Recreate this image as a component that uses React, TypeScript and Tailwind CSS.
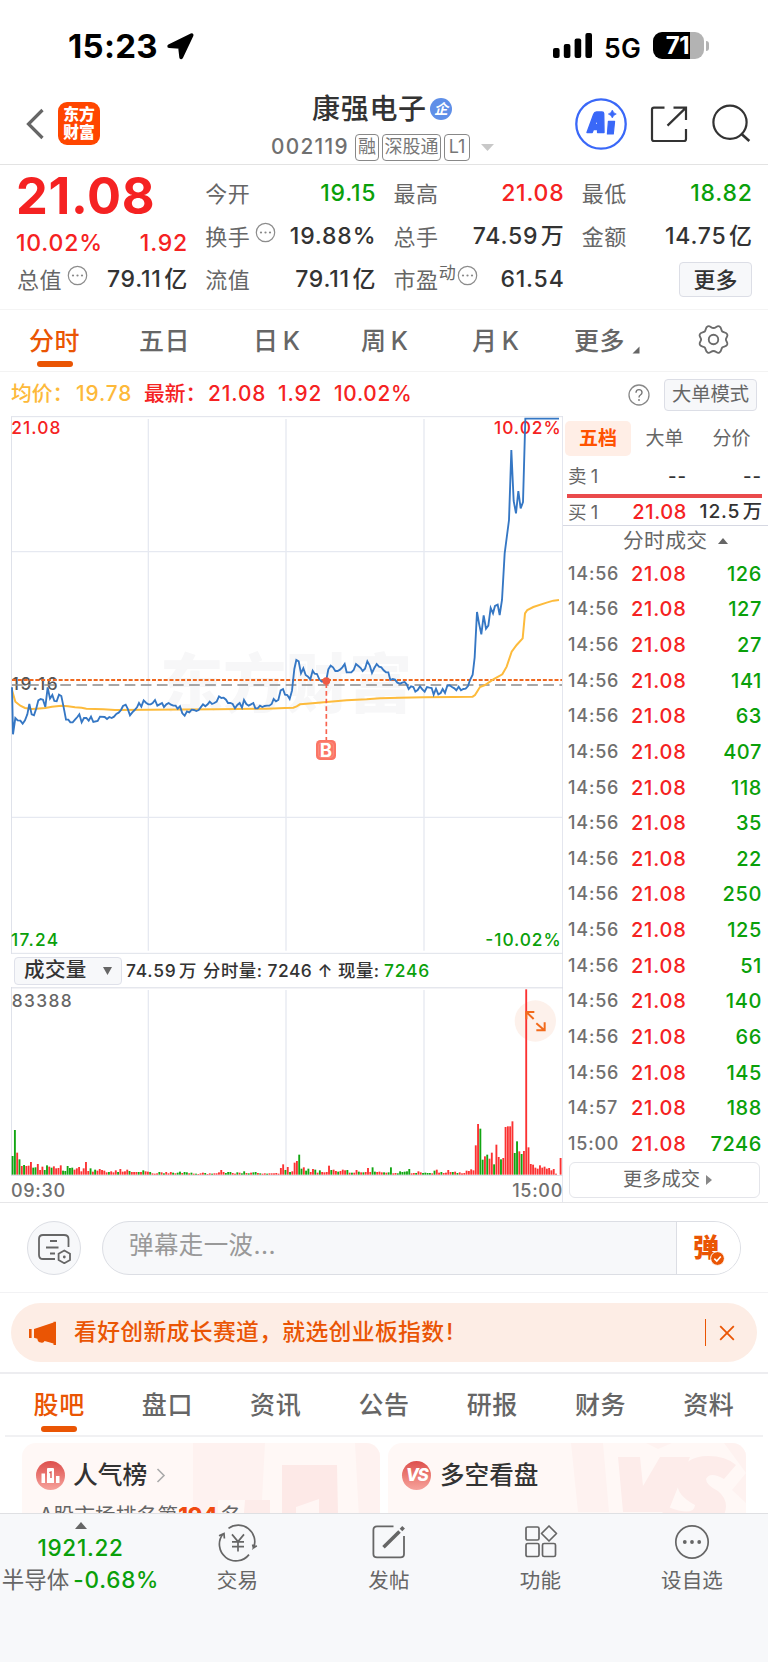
import React from "react";

const RED = "text-[#f52222]";
const GREEN = "text-[#0aa00a]";

/* ---------- small pieces ---------- */

function Dots({ className = "" }: { className?: string }) {
  return (
    <svg className={className} width="21" height="21" viewBox="0 0 21 21">
      <circle cx="10.5" cy="10.5" r="9.2" fill="none" stroke="#8c8c8c" strokeWidth="1.2" />
      <circle cx="6" cy="10.5" r="1.1" fill="#888" />
      <circle cx="10.5" cy="10.5" r="1.1" fill="#888" />
      <circle cx="15" cy="10.5" r="1.1" fill="#888" />
    </svg>
  );
}

/* A number with an optional Chinese unit set slightly apart from it. */
function Num({ value }: { value: string }) {
  const unit = /[万亿]$/.test(value) ? value.slice(-1) : "";
  const digits = unit ? value.slice(0, -1) : value;
  return (
    <span className="-mr-[0.8px] tracking-[0.8px]">
      {digits}
      {unit && <span className="ml-[2.5px]">{unit}</span>}
    </span>
  );
}

function StatusBar() {
  return (
    <div className="flex h-[80px] items-start pl-[68px] pt-[27px] text-black">
      <div className="flex h-[38px] w-[96px] items-center text-[33px] font-bold leading-none tracking-[0.3px]">15:23</div>
      <svg className="mt-[5px] ml-[1px]" width="30" height="30" viewBox="0 0 30 30">
        <path d="M26.6 3.2 L16.2 25.2 L15 14.9 L4.2 14.1 Z" fill="#000" stroke="#000" strokeWidth="3.8" strokeLinejoin="round" />
      </svg>
      <svg className="ml-[358px] mt-[5px]" width="40" height="28" viewBox="0 0 40 28">
        <rect x="0" y="16" width="6.6" height="10" rx="2" />
        <rect x="10.8" y="12" width="6.6" height="14" rx="2" />
        <rect x="21.6" y="6.5" width="6.6" height="19.5" rx="2" />
        <rect x="32.4" y="1" width="6.6" height="25" rx="2" />
      </svg>
      <div className="ml-[11px] mt-[7px] flex h-[28px] w-[49px] items-center text-[26.5px] font-semibold leading-none tracking-[0.3px]">5G</div>
      <div className="mt-[5px] flex items-center">
        <div className="flex h-[27px] w-[51px] items-center justify-center overflow-hidden rounded-[9px] bg-[linear-gradient(90deg,#000_72%,#b3b3b3_72%)] text-[24px] font-bold leading-none tracking-[-0.3px] text-white">
          <span className="-ml-[2px]">71</span>
        </div>
        <div className="ml-[2px] h-[10px] w-[3px] rounded-r-full bg-[#b3b3b3]" />
      </div>
    </div>
  );
}

function Tag({ children, w }: { children: React.ReactNode; w: string }) {
  return (
    <span className={`flex h-[27px] shrink-0 items-center justify-center rounded-[4px] border border-[#888] text-[18px] leading-none text-[#777] ${w}`}>
      {children}
    </span>
  );
}

function Header() {
  return (
    <div className="flex h-[85px] items-start border-b border-[#e3e3e3]">
      <svg className="ml-[25px] mt-[27px]" width="20" height="34" viewBox="0 0 20 34">
        <path d="M17.5 3 L3.5 17 L17.5 31" fill="none" stroke="#666" strokeWidth="3.2" />
      </svg>
      <div className="ml-[13px] mt-[22px] flex h-[43px] w-[42px] flex-col items-center justify-center rounded-[9px] bg-[#ff4600] text-[15.8px] font-black leading-[18px] text-white">
        <span>东方</span>
        <span>财富</span>
      </div>
      <div className="ml-[171px] w-[251px]">
        <div className="mt-[12px] flex h-[34px] items-center pl-[41px]">
          <span className="w-[116px] whitespace-nowrap text-[28px] font-medium leading-none tracking-[0.7px] text-[#333]">康强电子</span>
          <span className="ml-[2px] flex h-[22px] w-[22px] items-center justify-center rounded-full bg-[#5f8fe8] text-[14px] font-bold italic leading-none text-white">企</span>
        </div>
        <div className="mt-[7px] flex h-[28px] items-center gap-[3px]">
          <span className="w-[81px] text-[20.8px] font-medium leading-none tracking-[1.3px] text-[#707070]">002119</span>
          <Tag w="w-[24px]">融</Tag>
          <Tag w="w-[59px]">深股通</Tag>
          <Tag w="w-[26px]">L1</Tag>
          <svg className="ml-[8px]" width="13" height="7" viewBox="0 0 13 7">
            <path d="M0 0 H13 L6.5 7 Z" fill="#c8c8c8" />
          </svg>
        </div>
      </div>
      <svg className="ml-[53px] mt-[18px]" width="52" height="52" viewBox="0 0 52 52">
        <circle cx="26" cy="26" r="24.7" fill="#fff" stroke="#3a68f8" strokeWidth="2.3" />
        <path d="M12 34.5 L18.7 16.2 Q19.5 14 21.5 14 H27 Q28.6 14 28.7 15.6 L29 34.5 H22.6 V31.5 H18.4 L17.2 34.5 Z M19.9 26.8 H22.5 V20.2 Z" fill="#3a68f8" stroke="#3a68f8" strokeWidth="1.4" strokeLinejoin="round" fillRule="evenodd" />
        <path d="M33.4 23.3 H39.6 L38.3 36 H32.4 Z" fill="#3a68f8" stroke="#3a68f8" strokeWidth="1.2" strokeLinejoin="round" />
        <path d="M37.3 12 Q38.2 15 41.3 16 Q38.2 17 37.3 20 Q36.4 17 33.3 16 Q36.4 15 37.3 12 Z" fill="#3a68f8" stroke="#3a68f8" strokeWidth="0.6" />
      </svg>
      <svg className="ml-[22px] mt-[25px]" width="40" height="40" viewBox="0 0 40 40" fill="none" stroke="#333" strokeWidth="2.2">
        <path d="M15.5 2.6 H5 Q3 2.6 3 4.6 V34 Q3 36 5 36 H35 Q37 36 37 34 V24" />
        <path d="M24.5 2.6 H37 V15 M37 2.6 L18.5 20.6" />
      </svg>
      <svg className="ml-[22px] mt-[24px]" width="42" height="40" viewBox="0 0 42 40" fill="none" stroke="#333" strokeWidth="2.2">
        <circle cx="19" cy="18.2" r="16.6" />
        <path d="M30 29.5 L38.3 37" strokeWidth="2.6" />
      </svg>
    </div>
  );
}

function Quote({ label, value, color = "text-[#333]", extra }: { label: string; value: string; color?: string; extra?: React.ReactNode }) {
  return (
    <div className="flex items-center justify-between whitespace-nowrap">
      <span className="flex items-center">
        <span className="text-[22px] tracking-[0.6px] text-[#666]">{label}</span>
        {extra}
      </span>
      <span className={`text-[23px] font-medium ${color}`}>
        <Num value={value} />
      </span>
    </div>
  );
}

function Quotes() {
  return (
    <div className="grid h-[145px] grid-cols-4 grid-rows-[43px_43px_43px] gap-x-[18px] border-b border-[#f4f4f4] pl-[17px] pr-[16px] pt-[7px] leading-none">
      <div className={`-ml-[1px] flex items-center pt-[6px] text-[50.5px] font-bold tracking-[0.7px] ${RED}`}>21.08</div>
      <Quote label="今开" value="19.15" color={GREEN} />
      <Quote label="最高" value="21.08" color={RED} />
      <Quote label="最低" value="18.82" color={GREEN} />

      <div className={`-ml-[1px] flex items-center justify-between pt-[13px] text-[23px] font-medium ${RED}`}>
        <Num value="10.02%" />
        <Num value="1.92" />
      </div>
      <Quote label="换手" value="19.88%" extra={<Dots className="-mt-[9px] ml-[5px]" />} />
      <Quote label="总手" value="74.59万" />
      <Quote label="金额" value="14.75亿" />

      <Quote label="总值" value="79.11亿" extra={<Dots className="-mt-[9px] ml-[5px]" />} />
      <Quote label="流值" value="79.11亿" />
      <Quote
        label="市盈"
        value="61.54"
        extra={
          <>
            <span className="-mt-[13px] text-[17px] text-[#666]">动</span>
            <Dots className="-mt-[9px] ml-[1px]" />
          </>
        }
      />
      <div className="flex items-center justify-end">
        <div className="flex h-[35px] w-[73px] items-center justify-center rounded-[4px] border border-[#dcdee6] bg-[#f7f8fa] text-[22px] font-medium text-[#333]">更多</div>
      </div>
    </div>
  );
}

function PeriodTabs() {
  const tabs: [string, string][] = [
    ["五日", "w-[114px]"],
    ["日 K", "w-[108px]"],
    ["周 K", "w-[111px]"],
    ["月 K", "w-[102px]"],
  ];
  return (
    <div className="flex h-[62px] border-b border-[#f3f3f3] pl-[29px] text-[25px] font-medium leading-none tracking-[0.5px] text-[#666]">
      <div className="flex w-[110px] flex-col text-[#ea5504]">
        <span className="mt-[19px]">分时</span>
        <span className="ml-[8px] mt-[7px] h-[6px] w-[36px] rounded-full bg-[#ea5504]" />
      </div>
      {tabs.map(([t, w]) => (
        <span key={t} className={`mt-[19px] [word-spacing:-3px] ${w}`}>{t}</span>
      ))}
      <span className="mt-[19px] w-[58px] whitespace-nowrap">更多</span>
      <svg className="mt-[36px]" width="8" height="8" viewBox="0 0 8 8">
        <path d="M7.5 0.5 V7.5 H0.5 Z" fill="#666" />
      </svg>
      <svg className="ml-[58px] mt-[14px]" width="31" height="31" viewBox="0 0 30 30" fill="none" stroke="#6b6b6b" strokeWidth="1.8" strokeLinejoin="round">
        <path d="M15 3.9 C17.6 3.9 18.2 1.3 20.6 2.3 C23 3.3 22.2 6.1 23.5 7.3 C24.8 8.5 27.3 7.9 28.3 10 C29.3 12 27 13 27 15 C27 17 29.3 18 28.3 20 C27.3 22.1 24.8 21.5 23.5 22.7 C22.2 23.9 23 26.7 20.6 27.7 C18.2 28.7 17.6 26.1 15 26.1 C12.4 26.1 11.8 28.7 9.4 27.7 C7 26.7 7.8 23.9 6.5 22.7 C5.2 21.5 2.7 22.1 1.7 20 C0.7 18 3 17 3 15 C3 13 0.7 12 1.7 10 C2.7 7.9 5.2 8.5 6.5 7.3 C7.8 6.1 7 3.3 9.4 2.3 C11.8 1.3 12.4 3.9 15 3.9 Z" />
        <circle cx="15" cy="15" r="4.6" />
      </svg>
    </div>
  );
}

function InfoRow() {
  return (
    <div className={`flex h-[44px] items-center whitespace-nowrap pl-[11px] pt-[1px] text-[20.8px] font-medium leading-none ${RED}`}>
      <span className="w-[65px] text-[#fdb93a]">均价：</span>
      <span className="w-[68px] tracking-[0.9px] text-[#fdb93a]">19.78</span>
      <span className="w-[64px]">最新：</span>
      <span className="w-[70px] tracking-[0.9px]">21.08</span>
      <span className="w-[56px] tracking-[0.9px]">1.92</span>
      <span className="tracking-[0.7px]">10.02%</span>
      <svg className="ml-auto" width="22" height="22" viewBox="0 0 22 22">
        <circle cx="11" cy="11" r="10" fill="none" stroke="#888" strokeWidth="1.3" />
        <path d="M8 8.7 Q8 5.6 11 5.6 Q14 5.6 14 8.4 Q14 10 12.4 11 Q11 11.9 11 13.4" fill="none" stroke="#777" strokeWidth="1.4" />
        <circle cx="11" cy="16" r="0.9" fill="#777" />
      </svg>
      <div className="ml-[14px] mr-[11px] flex h-[32px] w-[93px] items-center justify-center rounded-[4px] border border-[#dcdee6] bg-[#f7f8fa] text-[19.3px] font-normal text-[#666]">大单模式</div>
    </div>
  );
}

/* ---------- price chart ---------- */

type P = [number, number];
const parse = (s: string, dx: number, dy: number): P[] =>
  s.trim().split(/\s+/).map((p) => {
    const [x, y] = p.split(",").map(Number);
    return [x + dx, y + dy];
  });
const join = (a: P[]) => a.map((p) => p.join(",")).join(" ");

const price = join([
  ...parse(
    "36,262 39,403 46,354 53,361 61,362 68,371 75,361 82,343 88,312 95,343 102,346 109,325 115,301 122,297 129,299 136,321 143,262 150,296 157,285 163,303 170,304 177,284 184,288 191,322 198,359 205,359 211,367 218,367 225,359 232,351 238,343 245,367 252,354 259,354 266,362 273,350 280,366 293,363 300,350 314,351 321,357 328,351 335,354 342,350 349,342 356,338 363,330 369,318 377,314 383,326 390,346 397,337 404,330 411,322 417,309 424,320 431,301 438,308 445,313 452,313 458,309 465,300 472,317 479,313 486,309 492,321 499,313 506,309 513,314 520,317 527,317 533,326 540,319 547,340 554,347 561,334 568,337 575,329 582,330 589,333 596,330 602,322 609,313 616,319 623,313 629,305 636,312 643,309 650,305 657,289 664,294 671,293 678,299 684,309 691,309 698,312 705,325 712,315 719,309 726,323 732,300 739,312 746,317 753,313 760,309 766,325 773,325 780,317 787,321 794,318 801,317 808,317 815,312 821,297 828,304 835,300 842,271 849,267 855,284 862,285 869,297 876,272 883,207",
    0,
    1800
  ),
  ...parse(
    "49,180 56,184 63,220 70,205 77,225 84,230 91,238 98,212 104,221 111,222 118,238 125,245 132,245 139,240 145,208 152,197 159,202 166,213 173,213 180,209 187,202 194,192 200,217 214,217 221,210 228,192 235,198 242,204 248,213 255,206 262,184 269,196 276,219 283,204 290,192 297,200 304,202 311,211 318,217 325,217 331,240 338,237 345,239 352,248 360,251 367,248 374,246 380,253 386,267 393,259 400,261 406,275 413,270 420,259 427,268 434,275 441,261 448,263 455,264 461,284 468,266 475,283 482,279 488,267 495,279 502,257 509,256 516,261 523,265 529,271 536,260 543,271 550,267 557,266 564,258 570,240 578,224 584,172 591,36 597,70 604,103 611,46 618,86 625,77 632,24 639,40 645,18 653,14 659,45 666,0",
    840,
    1800
  ),
  ...parse("362,760 375,660 382,450 389,603 396,640 403,573 410,625 417,606 424,356 525,356", 1152, 900),
]);

const average = join([
  ...parse(
    "36,270 46,305 61,317 75,324 95,327 109,326 136,324 156,320 184,317 204,319 225,322 245,323 259,326 310,328 345,330 650,328 800,326 855,324 880,323",
    0,
    1800
  ),
  ...parse(
    "50,319 60,313 80,311 140,306 200,301 260,298 300,295 360,293 430,292 520,291 578,290 585,285 600,261 615,255 640,238 667,223 680,200 695,155 710,135 728,115 735,40 742,30 760,21 800,8 820,2 837,0",
    840,
    1800
  ),
]);

const svgFont = "font-['Inter','Noto_Sans_CJK_SC',sans-serif] font-medium";

function PriceChart() {
  return (
    <svg className="block" width="552" height="538" viewBox="33 1248 1656 1614">
      <text className="font-['Noto_Sans_CJK_SC',sans-serif] font-black" x="480" y="2122" fontSize="190" textLength="756" lengthAdjust="spacing" fill="#f7f7f8">东方财富</text>
      <g stroke="#e6e9f1" strokeWidth="4">
        <path d="M445 1257 V2852 M858 1257 V2852 M1272 1257 V2852" />
        <path d="M34 1655 H1686 M34 2452 H1686" />
      </g>
      <path d="M34.5 1250 V2862 M33 1250 H1689 M33 2860 H1689" stroke="#dfe2ea" strokeWidth="3" fill="none" />
      <g className={svgFont} fontSize="52">
        <text x="34" y="1303" textLength="147" fill="#f52222">21.08</text>
        <text x="1482" y="1303" textLength="200" fill="#f52222">10.02%</text>
        <text x="33" y="2839" textLength="141" fill="#0aa00a">17.24</text>
        <text x="1456" y="2839" textLength="226" fill="#0aa00a">-10.02%</text>
        <text x="35" y="2071" textLength="138" fill="#555">19.16</text>
      </g>
      <path d="M36 2055 H1686" stroke="#8a8a8a" strokeWidth="5" strokeDasharray="32 16.3" />
      <path d="M36 2040 H1686" stroke="#f0681e" strokeWidth="6" strokeDasharray="12 5.5" />
      <polyline points={average} fill="none" stroke="#fdbb3c" strokeWidth="6" />
      <polyline points={price} fill="none" stroke="#3577c4" strokeWidth="5.6" />
      <path d="M979 2050 V2220" stroke="#f8634f" strokeWidth="5" strokeDasharray="14 9" />
      <circle cx="979" cy="2043" r="11.5" fill="#ee5a45" />
      <rect x="948" y="2220" width="60" height="60" rx="13" fill="#fb7565" />
      <rect x="956" y="2228" width="44" height="44" rx="8" fill="none" stroke="#fb8f82" strokeWidth="3" />
      <text className="font-['Inter'] font-bold" x="978" y="2270" textAnchor="middle" fontSize="56" fill="#fff">B</text>
    </svg>
  );
}

/* ---------- volume chart ---------- */

const volumeBars =
  "56g 134g 66r 46g 26r 29g 26r 27r 38r 21g 22g 32r 14r 24r 14g 28g 24r 21g 25r 19r 20r 28r 12g 11g 26g 20g 21g 15r 19r 23r 10r 19r 38r 11r 19g 9r 15g 12r 17r 14r 12r 7r 8g 10r 7r 13r 8g 17r 9r 10r 15r 11g 8r 8r 8r 8g 8r 13g 10r 9r 8g 4r 3r 4r 8g 7r 4g 8r 4r 8r 6g 4r 6g 9g 5r 8g 7g 4r 6g 3r 3g 2r 4r 6r 5g 2r 4r 3g 4r 4r 7r 14r 8r 5g 8g 8g 5r 3r 7g 6r 4g 10g 5r 4g 6r 7g 8g 5r 4g 3r 4r 3g 4r 4r 4r 5r 3r 20r 31r 14g 23r 8g 10r 36r 41r 60g 18g 22r 12g 18g 8r 17r 15g 6r 13g 8r 7r 8r 27r 14g 15r 11r 9g 11r 15r 13r 14g 6r 6g 6r 14r 9g 7r 7g 8r 20r 8r 22g 9g 8r 9r 7r 7g 6r 7g 22g 4r 5r 4g 10g 8g 9g 10g 17g 4r 5r 5g 10r 7r 5g 6g 5g 5g 4r 12g 15r 6r 8g 5r 6r 14r 8r 8g 9r 5g 7r 4r 5r 12r 11r 16r 13r 88r 152r 138g 45g 55r 60g 48r 66r 31g 90r 53r 46g 50r 143r 145r 145r 160r 65g 100g 70r 62g 71r 556r 82r 32r 30r 21r 18r 28r 21r 24r 18r 20r 13r 17r 3r 0r 50r";

const volumes = volumeBars.split(" ").map((s) => ({ h: parseInt(s, 10), up: s.endsWith("r") }));

function VolumeChart() {
  const last = volumes.length - 1;
  const step = (1681 - 37) / last;
  return (
    <svg className="block" width="552" height="189" viewBox="33 2963 1656 567">
      <path d="M445 2972 V3526 M858 2972 V3526 M1272 2972 V3526" stroke="#e6e9f1" strokeWidth="4" />
      <path d="M34.5 2963 V3530" stroke="#dfe2ea" strokeWidth="3" />
      <circle cx="1606" cy="3065" r="62" fill="#fdf1eb" />
      {volumes.map((v, i) => (
        <rect key={i} x={35 + i * step} y={3526 - v.h} width="5.6" height={v.h} fill={v.up ? "#fb3232" : "#12a512"} />
      ))}
      <g fill="none" stroke="#f26a1b" strokeWidth="6">
        <path d="M1579 3060 V3038 H1603 M1579 3038 L1601 3059" />
        <path d="M1609 3072 L1633 3093 M1634 3069 V3093 H1609" />
      </g>
      <path d="M33 2965.5 H1689" stroke="#d9dbe4" strokeWidth="3" />
      <path d="M33 3528.5 H1689" stroke="#dfe2ea" strokeWidth="3" />
      <text className={svgFont} x="35" y="3024" fontSize="52" textLength="180" fill="#666">83388</text>
    </svg>
  );
}

/* ---------- order book ---------- */

const trades: [string, string][] = [
  ["14:56", "126"], ["14:56", "127"], ["14:56", "27"], ["14:56", "141"], ["14:56", "63"], ["14:56", "407"],
  ["14:56", "118"], ["14:56", "35"], ["14:56", "22"], ["14:56", "250"], ["14:56", "125"], ["14:56", "51"],
  ["14:56", "140"], ["14:56", "66"], ["14:56", "145"], ["14:57", "188"], ["15:00", "7246"],
];

function OrderBook() {
  return (
    <div className="flex flex-1 flex-col leading-none">
      <div className="mt-[5px] flex h-[35px] items-center pl-[2px] text-[19px] text-[#666]">
        <span className="flex h-[35px] w-[66px] items-center justify-center rounded-[5px] bg-[#ffeee6] font-bold text-[#ff5200]">五档</span>
        <span className="flex w-[67px] justify-center">大单</span>
        <span className="flex w-[67px] justify-center">分价</span>
      </div>
      <div className="ml-[5px] mr-[6px] mt-[3px] flex h-[34px] items-center text-[18.5px] text-[#666]">
        <span className="w-[36px] [word-spacing:-1px]">卖 1</span>
        <span className="w-[83px] text-right font-medium tracking-[1px] text-[#333]">--</span>
        <span className="flex-1 text-right font-medium tracking-[1px] text-[#333]">--</span>
      </div>
      <div className="ml-[4px] mr-[6px] mt-[1px] h-[4px] shrink-0 bg-[#ea4a4c]" />
      <div className="ml-[5px] mr-[6px] mt-[1px] flex h-[26px] items-center text-[18.5px] text-[#666]">
        <span className="w-[36px] [word-spacing:-1px]">买 1</span>
        <span className={`w-[83px] text-right text-[20px] font-medium tracking-[0.6px] ${RED}`}>21.08</span>
        <span className="flex flex-1 justify-end text-[19.3px] font-medium text-[#333]">
          <Num value="12.5万" />
        </span>
      </div>
      <div className="flex h-[31px] items-center border-t-[1.5px] border-[#d6d8e2] pl-[60px] text-[20.8px] tracking-[0.3px] text-[#666]">
        分时成交
        <svg className="ml-[11px]" width="10" height="6" viewBox="0 0 10 6">
          <path d="M0 6 L5 0 L10 6 Z" fill="#666" />
        </svg>
      </div>
      <div className="ml-[5px] mr-[6px] flex flex-col">
        {trades.map(([t, v], i) => (
          <div key={i} className="flex h-[35.64px] items-center">
            <span className="w-[63px] text-[18px] font-medium tracking-[0.8px] text-[#707070]">{t}</span>
            <span className={`text-[20px] font-medium tracking-[0.8px] ${RED}`}>21.08</span>
            <span className={`ml-auto text-[20px] font-medium tracking-[0.6px] ${GREEN}`}>{v}</span>
          </div>
        ))}
      </div>
      <div className="ml-[6px] mr-[8px] flex h-[36px] items-center rounded-[6px] border border-[#e4e5ea] pl-[53px] text-[19.3px] text-[#666]">
        更多成交
        <svg className="ml-[6px]" width="6" height="10" viewBox="0 0 6 10">
          <path d="M0 0 L6 5 L0 10 Z" fill="#888" />
        </svg>
      </div>
    </div>
  );
}

function Main() {
  return (
    <div className="flex h-[787px] border-b border-[#e6e6e8] pl-[11px]">
      <div className="flex w-[552px] flex-col border-r border-[#e4e6ee]">
        <PriceChart />
        <div className="flex h-[33px] items-center pb-[1px] pl-[3px] pt-[1px] text-[17.4px] font-medium leading-none text-[#333]">
          <div className="flex h-[28px] w-[108px] shrink-0 items-center rounded-[4px] border border-[#dfe1ea] bg-[#f7f8fa] pl-[9px] text-[20.5px] tracking-[0.4px] text-[#333]">
            成交量
            <svg className="ml-[16px]" width="9" height="8" viewBox="0 0 9 8">
              <path d="M0 0 H9 L4.5 8 Z" fill="#666" />
            </svg>
          </div>
          <span className="ml-[4px] w-[77px] shrink-0">
            <Num value="74.59万" />
          </span>
          <span className="w-[181px] shrink-0 whitespace-nowrap tracking-[0.5px]">分时量: 7246 ↑ 现量:</span>
          <span className={`tracking-[0.8px] ${GREEN}`}>7246</span>
        </div>
        <VolumeChart />
        <div className="flex h-[26px] items-center justify-between pt-[3px] text-[18px] font-medium leading-none tracking-[0.7px] text-[#707070]">
          <span>09:30</span>
          <span className="-mr-[1px]">15:00</span>
        </div>
      </div>
      <OrderBook />
    </div>
  );
}

/* ---------- lower sections ---------- */

function Danmu() {
  return (
    <div className="flex h-[90px] items-start border-b border-[#f2f2f4] pl-[27px] pt-[18px]">
      <div className="flex h-[54px] w-[54px] items-center justify-center rounded-full border border-[#dcdee4] bg-[#f7f8fa]">
        <svg width="34" height="32" viewBox="0 0 34 32" fill="none" stroke="#666" strokeWidth="1.8">
          <path d="M18 27 H6 Q2 27 2 23 V7 Q2 3 6 3 H27 Q31.5 3 31.5 7 V15" />
          <path d="M13 9 H20 M9 15.5 H21.5 M13 21.5 H18" />
          <path d="M27.3 18.5 L33 21.7 V28 L27.3 31.2 L21.6 28 V21.7 Z" />
          <circle cx="27.3" cy="25" r="1.4" fill="#666" stroke="none" />
        </svg>
      </div>
      <div className="ml-[21px] flex h-[54px] w-[639px] overflow-hidden rounded-full border border-[#dcdee4] bg-[#f7f8fa]">
        <div className="flex flex-1 items-center pb-[5px] pl-[26px] text-[24.5px] leading-none tracking-[0.4px] text-[#999]">弹幕走一波...</div>
        <div className="flex w-[64px] items-center border-l border-[#dcdee4] bg-white pl-[16px]">
          <span className="text-[26px] font-black leading-none text-[#ea5504]">弹</span>
          <svg className="-ml-[9px] mt-[20px]" width="15" height="15" viewBox="0 0 15 15">
            <circle cx="7.5" cy="7.5" r="6.9" fill="#ea5504" stroke="#fff" strokeWidth="1" />
            <path d="M4.3 7.6 L6.8 10 L10.8 5.5" stroke="#fff" strokeWidth="1.6" fill="none" />
          </svg>
        </div>
      </div>
    </div>
  );
}

function Banner() {
  return (
    <div className="h-[81px] border-b-2 border-[#ededf0] px-[11px] pt-[10px]">
      <div className="flex h-[59px] items-center rounded-full bg-[#fdede5] pl-[17px] text-[22.8px] font-medium leading-none text-[#ea5504]">
        <svg width="29" height="26" viewBox="0 0 29 26" fill="#ea5504">
          <rect x="1" y="9" width="2.6" height="9" />
          <path d="M6 9 L25.5 2.6 V1.8 H28 V25 H25.5 V23.6 L16.6 21 Q15.5 23.4 13 22.6 Q9.5 22.2 9.4 18.7 L6 17.7 Z" />
        </svg>
        <span className="ml-[17px] tracking-[0.35px]">
          看好创新成长赛道，就选创业板指数<span className="ml-[2px]">!</span>
        </span>
        <span className="ml-auto h-[27px] w-[1.5px] bg-[#ea5504]" />
        <svg className="ml-[13px] mr-[22px]" width="16" height="16" viewBox="0 0 16 16">
          <path d="M1.2 1.2 L14.8 14.8 M14.8 1.2 L1.2 14.8" stroke="#ea5504" strokeWidth="1.8" />
        </svg>
      </div>
    </div>
  );
}

function InfoTabs() {
  const tabs = ["股吧", "盘口", "资讯", "公告", "研报", "财务", "资料"];
  return (
    <div className="mx-[5px] flex h-[63px] border-b-2 border-[#f1f1f3] text-[25px] font-medium leading-none tracking-[0.6px] text-[#666]">
      {tabs.map((t, i) => (
        <div key={t} className="flex flex-1 flex-col items-center pt-[19px]">
          <span className={i === 0 ? "text-[#ea5504]" : ""}>{t}</span>
          {i === 0 && <span className="mt-[8px] h-[6px] w-[36px] shrink-0 rounded-full bg-[#ea5504]" />}
        </div>
      ))}
    </div>
  );
}

function Cards() {
  return (
    <div className="flex h-[76px] gap-[8px] overflow-hidden pl-[22px] pt-[6px] leading-none">
      <div className="relative h-[120px] w-[358px] shrink-0 overflow-hidden rounded-[14px] bg-[#fff8f6]">
        <svg className="absolute right-0 top-0" width="190" height="120" viewBox="0 0 190 120">
          <path d="M3 0 H75 L72 57 H28 V75 H3 Z" fill="#fef2f0" />
          <path d="M165 0 H190 V75 H169 Z" fill="#fef2f0" />
          <path d="M92 22 H147 L149 120 H92 Z" fill="#fde9e7" />
          <path d="M55 57 H80 V120 H50 Z" fill="#fdecea" />
          <path d="M106 64 L129 56 V120 H117 V72 H106 Z" fill="#fff6f4" />
        </svg>
        <div className="relative flex h-[32px] items-center pl-[14px] pt-[32px]">
          <svg className="shrink-0" width="29" height="29" viewBox="0 0 29 29">
            <defs>
              <linearGradient id="pop" x1="0" y1="0" x2="0" y2="1">
                <stop offset="0" stopColor="#dd4f4c" />
                <stop offset="1" stopColor="#f6a29c" />
              </linearGradient>
            </defs>
            <circle cx="14.5" cy="14.5" r="14.5" fill="url(#pop)" />
            <path d="M5.5 12.5 H9 V22 H5.5 Z M11 8 Q11 7 12 7 H17 Q18 7 18 8 V22 H11 Z M20 15 H23.5 V22 H20 Z" fill="#fff" />
            <path d="M13.3 11.7 L15 11 V17" stroke="#dd5b57" strokeWidth="1.4" fill="none" />
          </svg>
          <span className="ml-[8px] text-[24.8px] font-medium text-[#333]">人气榜</span>
          <svg className="ml-[9px]" width="10" height="15" viewBox="0 0 10 15">
            <path d="M1.5 1 L8 7.5 L1.5 14" fill="none" stroke="#aaa" strokeWidth="1.6" />
          </svg>
        </div>
        <div className="relative whitespace-nowrap pl-[17px] pt-[29px] text-[20.8px] text-[#666]">
          A股市场排名第<span className="text-[22px] font-extrabold text-[#f04a10]">194</span>
          <span className="ml-[3px]">名</span>
        </div>
      </div>
      <div className="relative h-[120px] w-[358px] shrink-0 overflow-hidden rounded-[14px] bg-[#fff8f6]">
        <svg className="absolute right-0 top-0" width="190" height="120" viewBox="0 0 190 120">
          <path d="M15 0 H47 L53 69 H22 Z M90 0 H116 L102 6 Z M168 0 H190 V60 L176 47 L190 30 Z" fill="#fef2f0" />
          <path d="M62 14 H84 L87 43 L104 14 H134 L112 69 H67 Z" fill="#fdecea" />
          <path d="M180 22 L168 36 Q154 28 150 36 Q150 42 162 48 Q174 58 168 72 H104 L112 64 Q138 74 139 62 Q119 52 121 36 Q127 13 152 13 Q170 13 180 22 Z" fill="#fdecea" />
        </svg>
        <div className="relative flex h-[32px] items-center pl-[14px] pt-[32px]">
          <div className="flex h-[29px] w-[29px] shrink-0 items-center justify-center rounded-full bg-gradient-to-b from-[#dd4f4c] to-[#f6a29c] text-[17px] font-extrabold italic tracking-[-1.5px] text-white">VS</div>
          <span className="ml-[9px] text-[24.6px] font-medium text-[#333]">多空看盘</span>
        </div>
      </div>
    </div>
  );
}

const navItem = "flex flex-col items-center";
const navLabel = "mt-[9px] text-[20.5px] leading-none tracking-[0.2px] text-[#666]";

function BottomNav() {
  return (
    <div className="flex h-[149px] border-t border-[#dfe0e3] bg-[#f7f8fa] pt-[8px]">
      <div className={`w-[161px] ${navItem} leading-none`}>
        <svg width="12" height="7" viewBox="0 0 12 7">
          <path d="M0 7 L6 0 L12 7 Z" fill="#666" />
        </svg>
        <span className={`mt-[8px] text-[22.5px] font-medium tracking-[0.7px] ${GREEN}`}>1921.22</span>
        <span className="mt-[9px] flex items-center whitespace-nowrap text-[22.5px] text-[#666]">
          半导体<span className={`ml-[4px] font-medium tracking-[0.8px] ${GREEN}`}>-0.68%</span>
        </span>
      </div>
      <div className={`ml-[1px] w-[151px] ${navItem}`}>
        <svg width="40" height="40" viewBox="0 0 40 40" fill="none" stroke="#666" strokeWidth="1.7">
          <path d="M10.5 6.4 A16.5 16.5 0 0 1 35.6 25.8 L38.8 23.8 M35.6 26.6 L34.6 22.5" />
          <path d="M31 32.6 A16.5 16.5 0 0 1 5 12 M1 13.8 L6 11.6 L6.4 16.5" />
          <path d="M14 12.4 L20 19.6 L26 12.4 M20 19.6 V29.5 M14 19.9 H26 M14 24.6 H26" />
        </svg>
        <span className={navLabel}>交易</span>
      </div>
      <div className={`w-[152px] ${navItem}`}>
        <svg width="40" height="40" viewBox="0 0 40 40" fill="none" stroke="#666" strokeWidth="1.8">
          <path d="M24.5 4.4 H8 Q4.4 4.4 4.4 8 V32 Q4.4 35.4 8 35.4 H31.5 Q35 35.4 35 32 V14" />
          <path d="M14.5 25.3 L30.5 9.5" strokeWidth="3.6" />
          <path d="M32 8 L34.6 5.2" strokeWidth="3.6" />
        </svg>
        <span className={navLabel}>发帖</span>
      </div>
      <div className={`w-[151px] ${navItem}`}>
        <svg width="40" height="40" viewBox="0 0 40 40" fill="none" stroke="#666" strokeWidth="1.7" strokeLinejoin="round">
          <rect x="5" y="5" width="13" height="13" rx="1.6" />
          <rect x="5" y="21.5" width="13" height="13" rx="1.6" />
          <rect x="21.5" y="21.5" width="13" height="13" rx="1.6" />
          <path d="M28 4 L35.5 11.5 L28 19 L20.5 11.5 Z" />
        </svg>
        <span className={navLabel}>功能</span>
      </div>
      <div className={`w-[152px] ${navItem}`}>
        <svg width="40" height="40" viewBox="0 0 40 40">
          <circle cx="20" cy="20" r="16.2" fill="none" stroke="#666" strokeWidth="1.7" />
          <circle cx="12.8" cy="20" r="1.9" fill="#666" />
          <circle cx="20" cy="20" r="1.9" fill="#666" />
          <circle cx="27.2" cy="20" r="1.9" fill="#666" />
        </svg>
        <span className={navLabel}>设自选</span>
      </div>
    </div>
  );
}

export default function App() {
  return (
    <div className="h-[1662px] w-[768px] overflow-hidden bg-white font-['Inter','Noto_Sans_CJK_SC',sans-serif]">
      <StatusBar />
      <Header />
      <Quotes />
      <PeriodTabs />
      <InfoRow />
      <Main />
      <Danmu />
      <Banner />
      <InfoTabs />
      <Cards />
      <BottomNav />
    </div>
  );
}
